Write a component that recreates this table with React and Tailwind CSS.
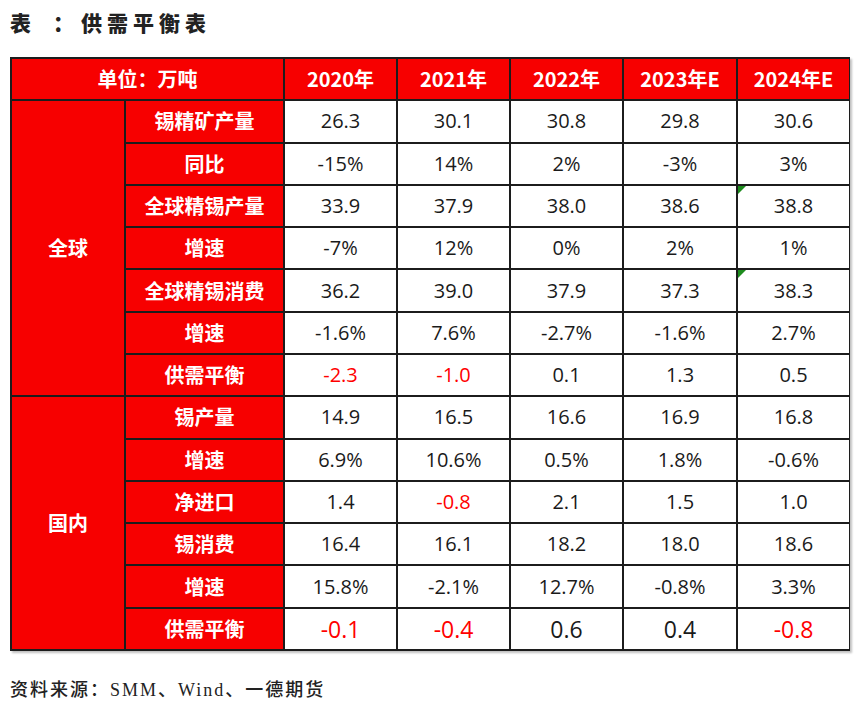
import React from 'react';

const years = ['2020年', '2021年', '2022年', '2023年E', '2024年E'];

const globalRows = [
  { label: '锡精矿产量', values: ['26.3', '30.1', '30.8', '29.8', '30.6'] },
  { label: '同比', values: ['-15%', '14%', '2%', '-3%', '3%'] },
  { label: '全球精锡产量', values: ['33.9', '37.9', '38.0', '38.6', '38.8'], flag: true },
  { label: '增速', values: ['-7%', '12%', '0%', '2%', '1%'] },
  { label: '全球精锡消费', values: ['36.2', '39.0', '37.9', '37.3', '38.3'], flag: true },
  { label: '增速', values: ['-1.6%', '7.6%', '-2.7%', '-1.6%', '2.7%'] },
  { label: '供需平衡', values: ['-2.3', '-1.0', '0.1', '1.3', '0.5'], red: [0, 1] },
];

const domesticRows = [
  { label: '锡产量', values: ['14.9', '16.5', '16.6', '16.9', '16.8'] },
  { label: '增速', values: ['6.9%', '10.6%', '0.5%', '1.8%', '-0.6%'] },
  { label: '净进口', values: ['1.4', '-0.8', '2.1', '1.5', '1.0'], red: [1] },
  { label: '锡消费', values: ['16.4', '16.1', '18.2', '18.0', '18.6'] },
  { label: '增速', values: ['15.8%', '-2.1%', '12.7%', '-0.8%', '3.3%'] },
  { label: '供需平衡', values: ['-0.1', '-0.4', '0.6', '0.4', '-0.8'], red: [0, 1, 4], big: true },
];

const headCell = 'bg-[#f70000] text-white font-bold text-[20px] flex items-center justify-center';

function DataRow({ row }) {
  return (
    <>
      <div className={headCell}>{row.label}</div>
      {row.values.map((v, i) => (
        <div
          key={i}
          className={`relative bg-white flex items-center justify-center ${row.big ? 'text-[23px]' : 'text-[20px]'} ${row.red && row.red.includes(i) ? 'text-[#ff0000]' : 'text-[#1a1a1a]'}`}
          style={{ fontFamily: '"Open Sans", "Noto Sans CJK SC", sans-serif' }}
        >
          {row.flag && i === 4 && (
            <span className="absolute left-0 top-0 w-0 h-0 border-t-[8px] border-r-[8px] border-t-[#1e8c1e] border-r-transparent" />
          )}
          {v}
        </div>
      ))}
    </>
  );
}

export default function App() {
  return (
    <div className="w-[857px] h-[711px] bg-white pl-[10px]" style={{ fontFamily: '"Noto Sans CJK SC", sans-serif' }}>
      <div
        className="h-[57px] pt-[9px] flex items-start text-[21px] font-black text-[#222] tracking-[5px] leading-[30px]"
        style={{ fontFamily: '"Liberation Serif", "Noto Sans CJK SC", serif' }}
      >
        <span>表</span>
        <span className="ml-[17px]">：</span>
        <span className="ml-[2px]">供需平衡表</span>
      </div>

      <div className="w-[840px] h-[594px] grid grid-cols-[112px_157px_111px_111px_111px_112px_111px] grid-rows-[repeat(14,minmax(0,1fr))] gap-[2px] p-[2px] bg-[#1c1c1c] shadow-[2px_2px_2px_rgba(0,0,0,0.25)]">
        <div className={`${headCell} col-span-2`}>单位：万吨</div>
        {years.map((y) => (
          <div key={y} className={headCell}>{y}</div>
        ))}

        <div className={`${headCell} row-span-7`}>全球</div>
        {globalRows.map((r, i) => (
          <DataRow key={i} row={r} />
        ))}

        <div className={`${headCell} row-span-6`}>国内</div>
        {domesticRows.map((r, i) => (
          <DataRow key={i} row={r} />
        ))}
      </div>

      <div
        className="mt-[26px] text-[18px] font-medium text-[#222] tracking-[2px]"
        style={{ fontFamily: '"Liberation Serif", "Noto Sans CJK SC", serif' }}
      >
        资料来源：SMM、Wind、一德期货
      </div>
    </div>
  );
}
